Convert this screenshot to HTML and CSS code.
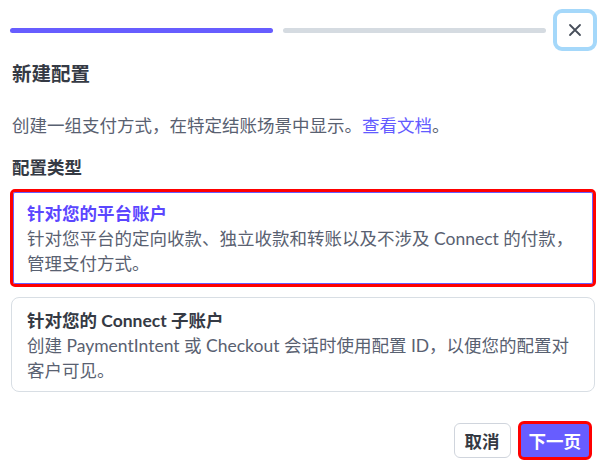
FILE: index.html
```html
<!DOCTYPE html>
<html lang="zh-CN">
<head>
<meta charset="utf-8">
<link rel="stylesheet" href="styles.css">
</head>
<body>
<div class="dialog">
  <div class="top">
    <div class="bars">
      <div class="bar bar-on"></div>
      <div class="bar"></div>
    </div>
    <button class="close" aria-label="关闭">
      <svg width="14" height="14" viewBox="0 0 14 14"><path d="M2 2L12 12M12 2L2 12" stroke="#474e5a" stroke-width="1.8" stroke-linecap="round"/></svg>
    </button>
  </div>
  <h1 class="title">新建配置</h1>
  <p class="desc">创建一组支付方式，在特定结账场景中显示。<a class="link">查看文档</a>。</p>
  <h2 class="label">配置类型</h2>
  <div class="options">
    <div class="card card-sel">
      <div class="card-title">针对您的平台账户</div>
      <div class="card-text">针对您平台的定向收款、独立收款和转账以及不涉及 Connect 的付款，管理支付方式。</div>
    </div>
    <div class="card">
      <div class="card-title">针对您的 Connect 子账户</div>
      <div class="card-text">创建 PaymentIntent 或 Checkout 会话时使用配置 ID，以便您的配置对客户可见。</div>
    </div>
  </div>
  <div class="actions">
    <button class="btn btn-cancel">取消</button>
    <button class="btn btn-next">下一页</button>
  </div>
</div>
</body>
</html>
```
FILE: styles.css
```css
* { box-sizing: border-box; }
html, body { margin: 0; padding: 0; background: #fff; }
body {
  font-family: "Lato", "Noto Sans CJK SC", sans-serif;
  color: #353a44;
  width: 605px;
  height: 468px;
  overflow: hidden;
}
.dialog { padding: 9px 8px 0 10px; }
.top { display: flex; align-items: center; }
.bars { flex: 1; display: flex; gap: 10px; }
.bar { flex: 1; height: 5px; border-radius: 3px; background: #d5dbe1; }
.bar-on { background: #675dff; }
.close {
  margin-left: 7px;
  width: 44px; height: 42px;
  border: 4px solid #a5d8fa;
  border-radius: 9px;
  background: #fff;
  display: flex; align-items: center; justify-content: center;
  padding: 0;
}
.title { font-size: 19.5px; font-weight: 700; margin: 10px 0 0 2px; line-height: 26px; }
.desc { font-size: 17.5px; color: #596171; margin: 26px 0 0 2px; line-height: 26px; }
.link { color: #635bff; }
.label { font-size: 17.5px; font-weight: 700; margin: 16px 0 0 2px; line-height: 26px; }
.options { display: flex; flex-direction: column; gap: 10px; margin-top: 8px; }
.card {
  margin: 0 2px 0 1px;
  border: 1px solid #d8dee4;
  border-radius: 8px;
  padding: 10px 15px 8px 15px;
  font-size: 17.5px;
  line-height: 25px;
}
.card-sel {
  margin: 0 1px 0 0;
  border: 3px solid #ff0000;
  border-radius: 5px;
  box-shadow: inset 0 0 0 1px #675dff;
  padding: 9px 14px 8px 14px;
}
.card-title { font-weight: 700; color: #353a44; }
.card-sel .card-title { color: #5b46ff; }
.card-text { color: #596171; }
.actions { display: flex; justify-content: flex-end; align-items: center; gap: 7px; margin-top: 29px; padding-right: 5px; }
.btn {
  font-family: inherit;
  font-size: 17.5px;
  font-weight: 700;
  border-radius: 6px;
  padding: 0 10px;
  height: 35px;
}
.btn-cancel { background: #fff; border: 1px solid #d0d5dd; color: #353a44; }
.btn-next { background: #675dff; color: #fff; border: 3px solid #ff0000; height: 39px; padding: 0 8px; }
```
